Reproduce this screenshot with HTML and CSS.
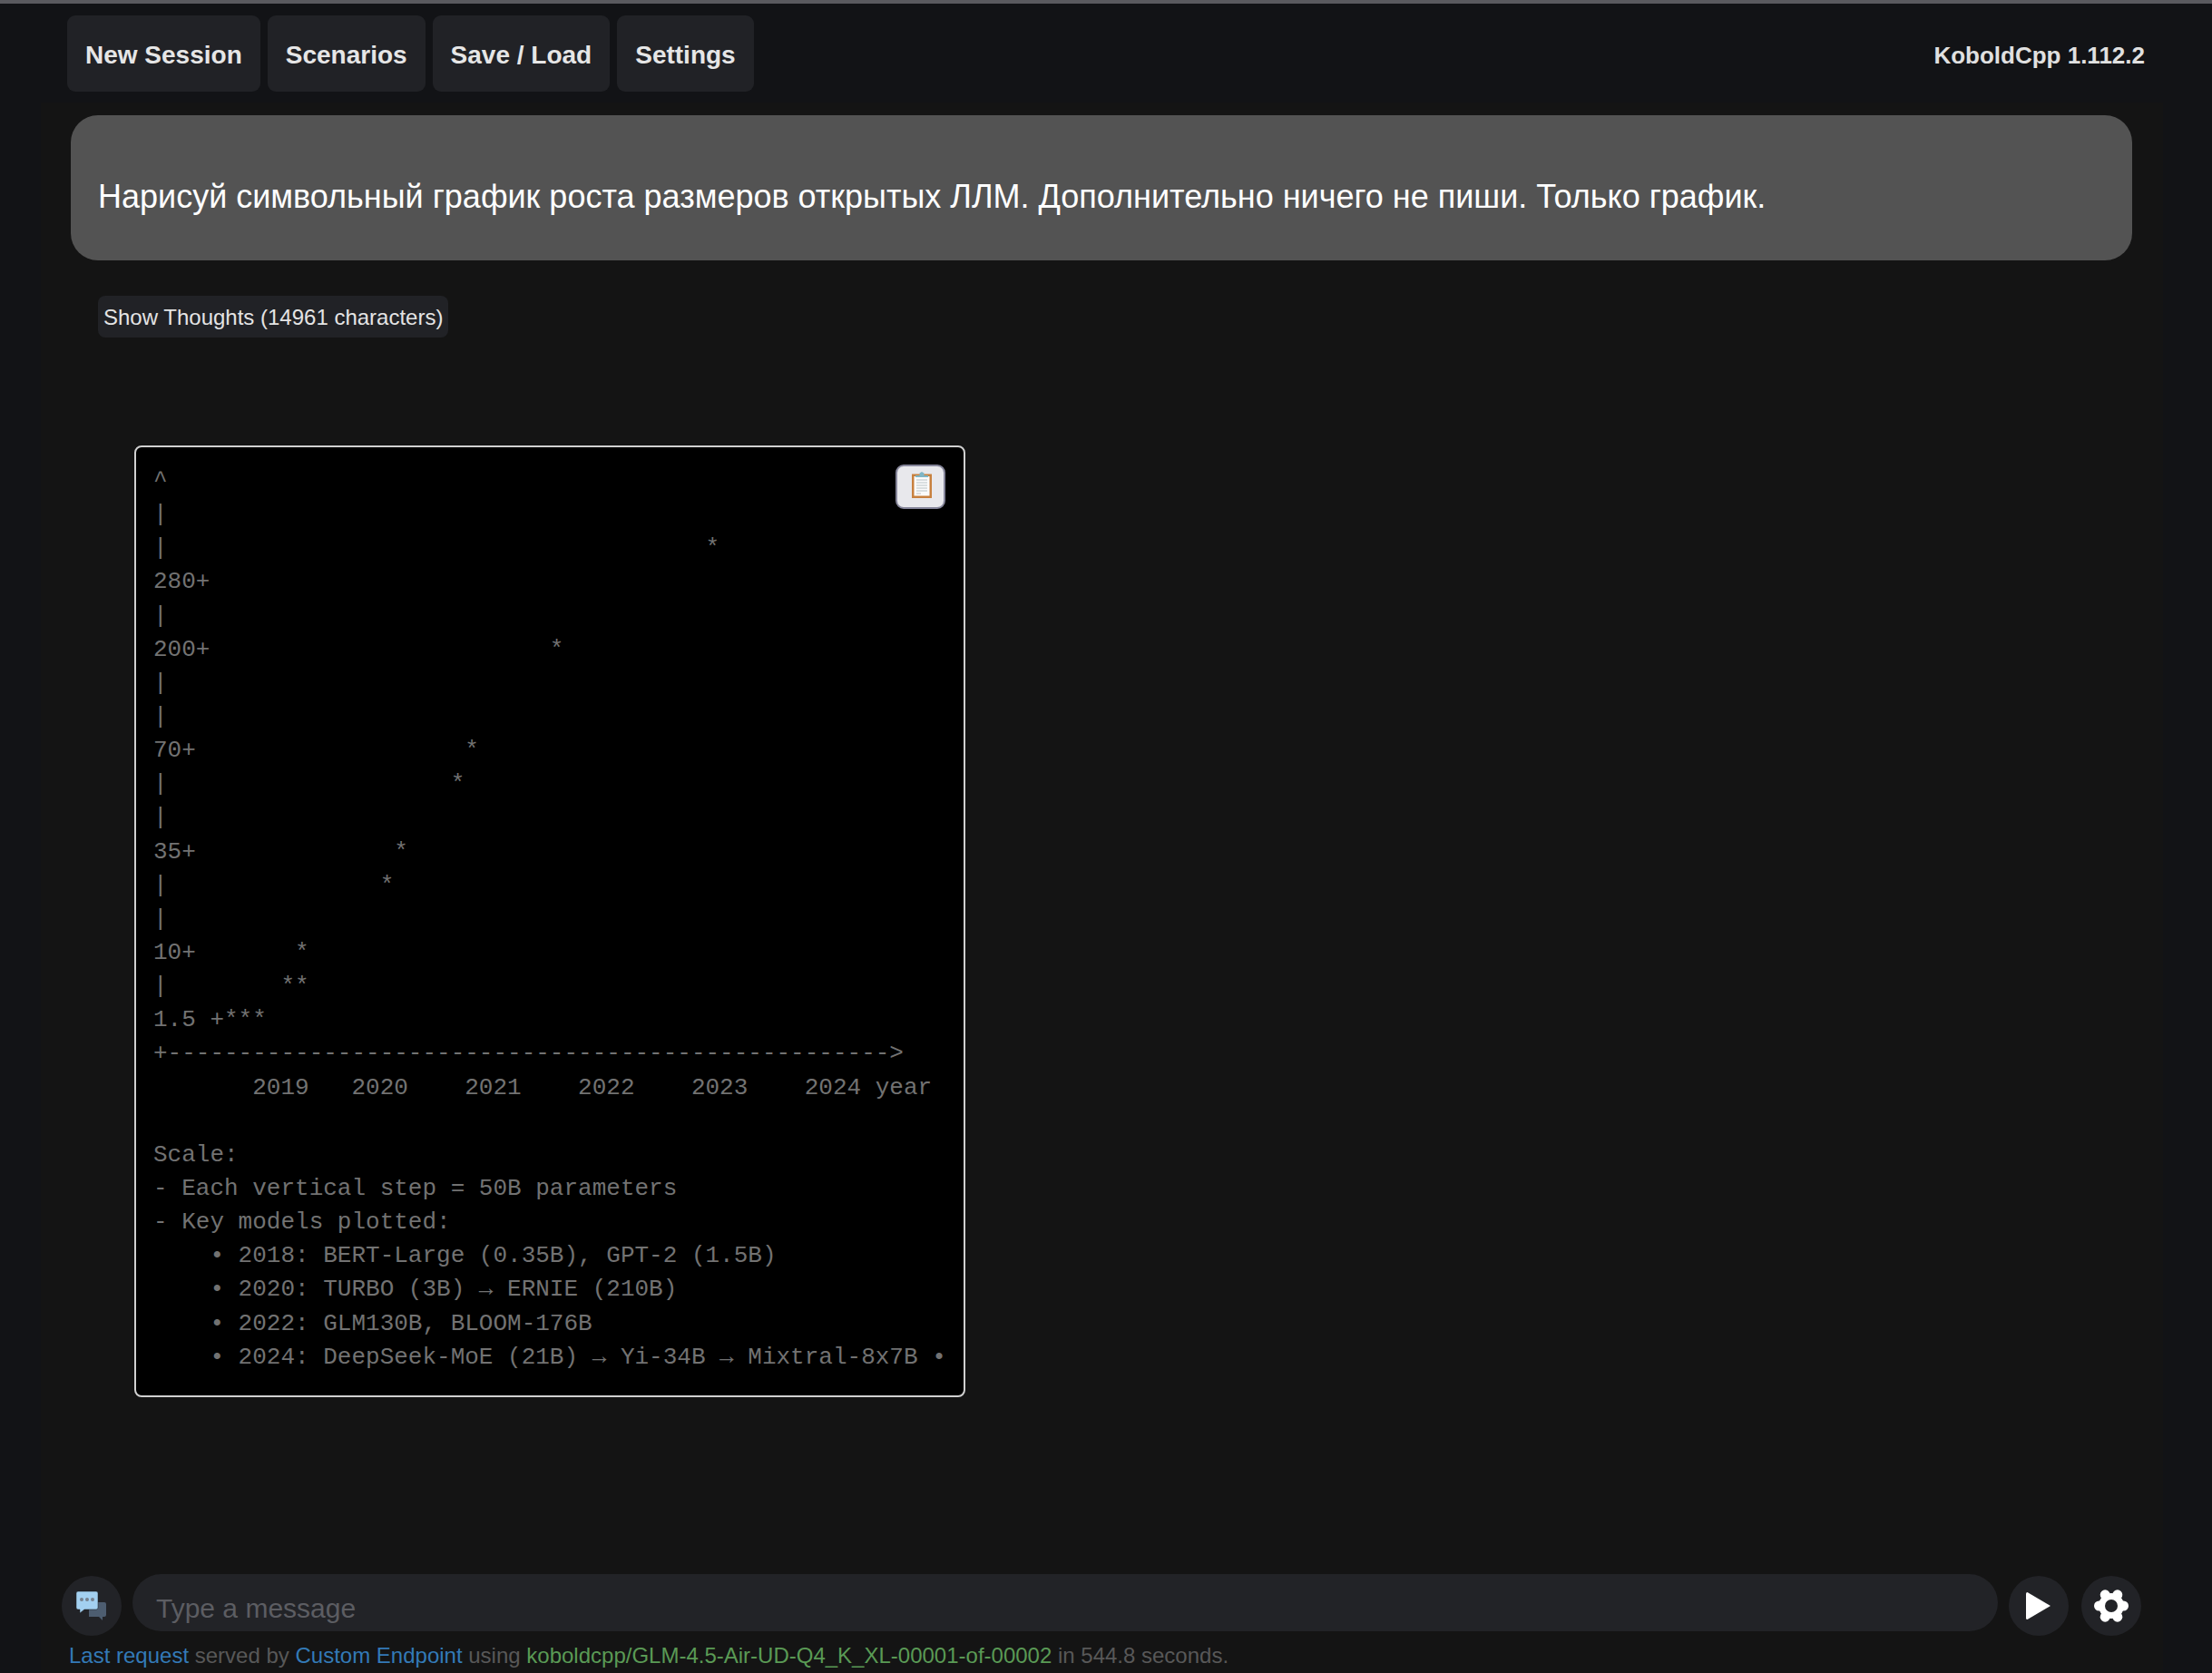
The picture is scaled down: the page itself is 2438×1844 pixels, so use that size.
FILE: index.html
```html
<!DOCTYPE html>
<html lang="en">
<head>
    <meta charset="UTF-8">
    <meta name="viewport" content="width=device-width, initial-scale=1.0">
    <title>KoboldCpp</title>
    <link rel="stylesheet" href="styles.css">
</head>
<body>
    <div class="top-strip"></div>
    <div class="topbar">
        <div class="tabs">
            <button class="tab">New Session</button>
            <button class="tab">Scenarios</button>
            <button class="tab">Save / Load</button>
            <button class="tab">Settings</button>
        </div>
        <div class="version">KoboldCpp 1.112.2</div>
    </div>

    <div class="main">
        <div class="chat">
            <div class="bubble">Нарисуй символьный график роста размеров открытых ЛЛМ. Дополнительно ничего не пиши. Только график.</div>
            <button class="thoughts">Show Thoughts (14961 characters)</button>
            <div class="code-block">
                <button class="copy-btn" title="Copy">
                    <svg class="copy-icon" width="22" height="29" viewBox="0 0 22 29">
                        <rect x="0" y="2.500" width="22" height="26.500" fill="#c8813f"/>
                        <rect x="2.500" y="5" width="17" height="21.500" fill="#fbfbfb"/>
                        <path d="M5 9h12M5 12h12M5 15h12M5 18h12M5 21h12" stroke="#b8c2c6" stroke-width="1"/>
                        <path d="M5 24h5" stroke="#d4d4d4" stroke-width="1.5"/>
                        <path d="M4 6V4h4.500V1.500L11 0l2.500 1.500V4H18v2z" fill="#7fb6c6"/>
                    </svg>
                </button>
<pre class="code">^
|
|                                      *
280+
|
200+                        *
|
|
70+                   *
|                    *
|
35+              *
|               *
|
10+       *
|        **
1.5 +***
+---------------------------------------------------&gt;
       2019   2020    2021    2022    2023    2024 year

Scale:
- Each vertical step = 50B parameters
- Key models plotted:
    • 2018: BERT-Large (0.35B), GPT-2 (1.5B)
    • 2020: TURBO (3B) → ERNIE (210B)
    • 2022: GLM130B, BLOOM-176B
    • 2024: DeepSeek-MoE (21B) → Yi-34B → Mixtral-8x7B •</pre>
            </div>
        </div>

        <div class="composer">
            <button class="round-btn">
                <svg width="34" height="34" viewBox="0 0 34 34">
                    <path d="M14 13h17a2 2 0 0 1 2 2v12a2 2 0 0 1-2 2h-2v4l-4-4H14z" fill="#4d5d70"/>
                    <path d="M2 1h20a2 2 0 0 1 2 2v16a2 2 0 0 1-2 2H9l-5 4v-4H2a2 2 0 0 1-2-2V3a2 2 0 0 1 2-2z" fill="#a3d0f0" stroke="#1b1c20" stroke-width="0.5"/>
                    <circle cx="6" cy="10" r="2" fill="#75818e"/>
                    <circle cx="12" cy="10" r="2" fill="#75818e"/>
                    <circle cx="18" cy="10" r="2" fill="#75818e"/>
                </svg>
            </button>
            <input class="message-input" type="text" placeholder="Type a message">
            <button class="round-btn">
                <svg width="28" height="32" viewBox="0 0 28 32">
                    <path d="M1.500 1 L27 16 L1.500 31 Q0 31 0 29.500 V2.500 Q0 1 1.500 1z" fill="#ffffff"/>
                </svg>
            </button>
            <button class="round-btn settings-btn">
                <svg width="38" height="38" viewBox="-19 -19 38 38">
                    <circle r="14" fill="#ffffff"/>
                    <circle cx="13.500" cy="0" r="5.500" fill="#ffffff"/>
                    <circle cx="-13.500" cy="0" r="5.500" fill="#ffffff"/>
                    <circle cx="6.800" cy="-12.200" r="5.500" fill="#ffffff"/>
                    <circle cx="-6.800" cy="-12.200" r="5.500" fill="#ffffff"/>
                    <circle cx="6.800" cy="12.200" r="5.500" fill="#ffffff"/>
                    <circle cx="-6.800" cy="12.200" r="5.500" fill="#ffffff"/>
                    <circle r="7" fill="#222327"/>
                </svg>
            </button>
        </div>
        <div class="status">
            <span class="link">Last request</span> served by <span class="link">Custom Endpoint</span> using <span class="model">koboldcpp/GLM-4.5-Air-UD-Q4_K_XL-00001-of-00002</span> in 544.8 seconds.
        </div>
    </div>
</body>
</html>
```
FILE: styles.css
```css
* {
    box-sizing: border-box;
}

html, body {
    height: 100%;
}

body {
    margin: 0;
    display: flex;
    flex-direction: column;
    overflow: hidden;
    background: #121316;
    font-family: "Liberation Sans", Arial, sans-serif;
}

.top-strip {
    height: 4px;
    background: #5a5a5f;
}

/* Top navigation */
.topbar {
    height: 109px;
    padding: 13px 74px 0 74px;
    display: flex;
    justify-content: space-between;
}

.tabs {
    display: flex;
    gap: 8px;
}

.tab {
    height: 84px;
    padding: 3px 20px 0;
    border: none;
    border-radius: 9px;
    background: #212226;
    color: #e6e6e6;
    font-family: inherit;
    font-size: 28px;
    font-weight: bold;
}

.version {
    margin-top: 29px;
    color: #e0e0e0;
    font-size: 26px;
    font-weight: bold;
}

/* Chat area */
.main {
    flex: 1;
    min-height: 0;
    margin: 0 54px 0 45px;
    display: flex;
    flex-direction: column;
    background: #141414;
}

.chat {
    flex: 1;
    min-height: 0;
    padding: 14px 34px 0 33px;
}

.bubble {
    height: 160px;
    padding: 67px 31px 0 30px;
    border-radius: 30px;
    background: #535353;
    color: #ffffff;
    font-size: 36px;
    line-height: 46px;
}

.thoughts {
    display: block;
    height: 46px;
    margin: 39px 0 0 30px;
    padding: 2px 6px 0;
    border: none;
    border-radius: 8px;
    background: #212226;
    color: #e4e4e4;
    font-family: inherit;
    font-size: 24px;
}

.code-block {
    position: relative;
    width: 916px;
    height: 1049px;
    margin: 119px 0 0 70px;
    padding: 19px 19px;
    border: 2px solid #d0d0d0;
    border-radius: 8px;
    background: #000000;
}

.code {
    margin: 0;
    color: #727272;
    font-family: "Liberation Mono", monospace;
    font-size: 26px;
    line-height: 37.14px;
}

.copy-btn {
    position: absolute;
    top: 19px;
    right: 20px;
    width: 55px;
    height: 49px;
    padding: 0;
    display: flex;
    align-items: center;
    justify-content: center;
    border: 2px solid #85859a;
    border-radius: 9px;
    background: #e8e8ec;
}

.copy-icon {
    margin: -4px 0 0 2px;
}

/* Bottom input */
.composer {
    height: 70px;
    padding: 0 24px 0 23px;
    display: flex;
    gap: 12px;
}

.round-btn {
    flex: none;
    width: 66px;
    height: 66px;
    margin-top: 2px;
    padding: 0;
    display: flex;
    align-items: center;
    justify-content: center;
    border: none;
    border-radius: 50%;
    background: #222327;
}

.settings-btn {
    margin-left: 2px;
}

.message-input {
    flex: 1;
    min-width: 0;
    height: 63px;
    padding: 12px 26px 0;
    border: none;
    border-radius: 32px;
    outline: none;
    background: #222327;
    font-family: inherit;
    font-size: 30px;
}

.message-input::placeholder {
    color: #5c5d62;
    opacity: 1;
}

.status {
    height: 39px;
    padding: 6px 0 0 31px;
    color: #585858;
    font-size: 24px;
    white-space: nowrap;
}

.link {
    color: #337ab7;
}

.model {
    color: #5a9a55;
}
```
